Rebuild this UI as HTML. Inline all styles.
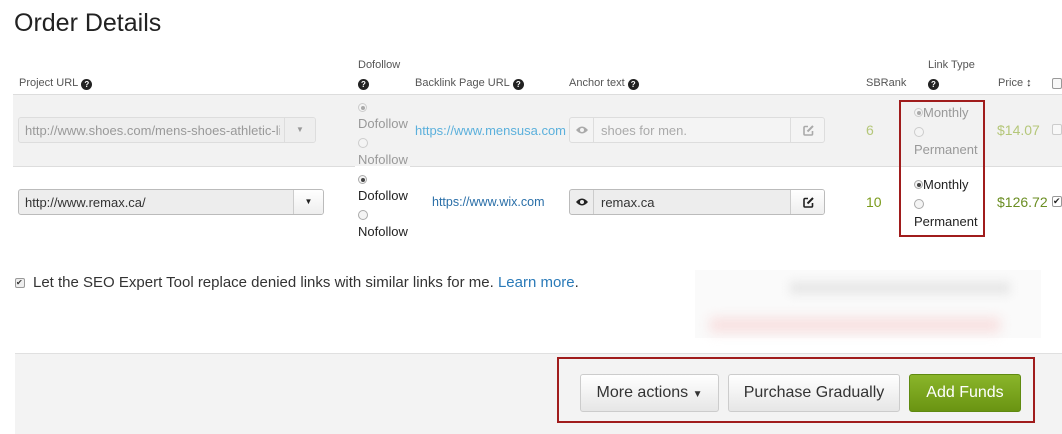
<!DOCTYPE html>
<html><head><style>
*{margin:0;padding:0;box-sizing:border-box}
body{width:1062px;height:434px;background:#fff;font-family:"Liberation Sans",Arial,sans-serif;position:relative;overflow:hidden;color:#333}
.a{position:absolute;white-space:nowrap}
.h{font-size:11px;color:#555}
.q{display:inline-block;width:11px;height:11px;border-radius:50%;background:#222;color:#fff;font-size:8px;font-weight:bold;text-align:center;line-height:11px;vertical-align:-1px;margin-left:3px}
.r{display:inline-block;width:10px;height:10px;border-radius:50%;border:1px solid #aaa;background:#f4f4f4;position:relative}
.r.on::after{content:"";position:absolute;left:2px;top:2px;width:4px;height:4px;border-radius:50%;background:#444}
.g .r{border-color:#ccc}.g .r.on::after{background:#aaa}
.t{font-size:14px}
.box{position:absolute;border:1px solid #ccc;border-radius:3px;background:#eee;font-size:13px;overflow:hidden}
.btn{position:absolute;top:374px;height:38px;border:1px solid #ccc;border-radius:3px;background:linear-gradient(#fff,#e6e6e6);font-size:16px;color:#333;text-align:center;line-height:36px}
</style></head><body>
<div class="a" style="left:14px;top:9px;font-size:25px;color:#222">Order Details</div>

<div class="a h" style="left:19px;top:77px">Project URL<span class="q">?</span></div>
<div class="a h" style="left:358px;top:59px">Dofollow</div>
<div class="a h" style="left:358px;top:77px"><span class="q" style="margin:0">?</span></div>
<div class="a h" style="left:415px;top:77px">Backlink Page URL<span class="q">?</span></div>
<div class="a h" style="left:569px;top:77px">Anchor text<span class="q">?</span></div>
<div class="a h" style="left:866px;top:77px">SBRank</div>
<div class="a h" style="left:928px;top:59px">Link Type</div>
<div class="a h" style="left:928px;top:77px"><span class="q" style="margin:0">?</span></div>
<div class="a h" style="left:998px;top:77px">Price <b style="color:#222">↕</b></div>
<div class="a" style="left:1052px;top:78px;width:10px;height:11px;border:1px solid #999;border-radius:2px;background:#f8f8f8"></div>

<div class="a" style="left:13px;top:94px;width:1049px;height:1px;background:#ddd"></div>
<div class="a" style="left:13px;top:95px;width:1049px;height:71px;background:#f2f2f2"></div>
<div class="a" style="left:13px;top:166px;width:1049px;height:1px;background:#ddd"></div>
<div class="a" style="left:355px;top:166px;width:55px;height:1px;background:#fff"></div>

<!-- row1 -->
<div class="box g" style="left:18px;top:117px;width:298px;height:26px;background:#eee;color:#999;border-color:#ddd">
 <span class="a" style="left:6px;top:5px;width:255px;overflow:hidden">http://www.shoes.com/mens-shoes-athletic-list</span>
 <span class="a" style="left:265px;top:0;width:31px;height:24px;border-left:1px solid #ddd;background:#eee;text-align:center;line-height:24px;font-size:8px;color:#999">▼</span>
</div>
<div class="a g" style="left:358px;top:100px;font-size:13px;color:#999;line-height:16px">
 <span class="r on" style="width:9px;height:9px"></span><br>Dofollow<br><span class="r" style="margin-top:6px"></span><br>Nofollow</div>
<div class="a" style="left:415px;top:123px;font-size:13px;color:#5bb0dc">https://www.mensusa.com</div>
<div class="box" style="left:569px;top:117px;width:256px;height:26px;background:#f4f4f4;border-color:#ddd;color:#aaa">
 <svg class="a" style="left:6px;top:7px" width="12" height="10" viewBox="0 0 12 10"><path d="M0 5Q6 -2 12 5Q6 12 0 5Z" fill="#aaa"/><circle cx="6" cy="5" r="2" fill="#f4f4f4"/></svg>
 <span class="a" style="left:23px;top:0;width:1px;height:24px;background:#ddd"></span>
 <span class="a" style="left:31px;top:5px">shoes for men.</span>
 <span class="a" style="left:220px;top:0;width:1px;height:24px;background:#ddd"></span>
 <svg class="a" style="left:233px;top:7px" width="11" height="11" viewBox="0 0 11 11"><path d="M5 1.5H2A1 1 0 0 0 1 2.5V9A1 1 0 0 0 2 10H8.5A1 1 0 0 0 9.5 9V6" stroke="#aaa" stroke-width="1.6" fill="none"/><path d="M4.5 6.5L10 1" stroke="#aaa" stroke-width="2"/></svg>
</div>
<div class="a t" style="left:866px;top:122px;color:#b5c77a">6</div>
<div class="a g" style="left:914px;top:104px;font-size:13px;color:#999;line-height:17px"><span class="r on" style="width:9px;height:9px"></span>Monthly<br><span class="r" style="margin-top:6px"></span><br>Permanent</div>
<div class="a t" style="left:997px;top:122px;color:#b5c77a">$14.07</div>
<div class="a" style="left:1052px;top:124px;width:10px;height:11px;border:1px solid #ccc;border-radius:2px;background:#f8f8f8"></div>

<!-- row2 -->
<div class="box" style="left:18px;top:189px;width:306px;height:26px;background:#ededed;border-color:#bbb;color:#333">
 <span class="a" style="left:6px;top:5px">http://www.remax.ca/</span>
 <span class="a" style="left:274px;top:0;width:30px;height:24px;border-left:1px solid #ccc;background:linear-gradient(#fff,#eee);text-align:center;line-height:24px;font-size:8px;color:#222">▼</span>
</div>
<div class="a" style="left:358px;top:172px;font-size:13px;color:#222;line-height:16px">
 <span class="r on" style="width:9px;height:9px"></span><br>Dofollow<br><span class="r" style="margin-top:6px"></span><br>Nofollow</div>
<div class="a" style="left:432px;top:195px;font-size:12.5px;color:#2a6fa8">https://www.wix.com</div>
<div class="box" style="left:569px;top:189px;width:256px;height:26px;background:#ededed;border-color:#bbb;color:#333">
 <svg class="a" style="left:6px;top:7px" width="12" height="10" viewBox="0 0 12 10"><path d="M0 5Q6 -2 12 5Q6 12 0 5Z" fill="#222"/><circle cx="6" cy="5" r="2" fill="#ededed"/></svg>
 <span class="a" style="left:23px;top:0;width:1px;height:24px;background:#ccc"></span>
 <span class="a" style="left:31px;top:5px">remax.ca</span>
 <span class="a" style="left:220px;top:0;width:35px;height:24px;border-left:1px solid #ccc;background:linear-gradient(#fff,#eee)"></span>
 <svg class="a" style="left:233px;top:7px" width="11" height="11" viewBox="0 0 11 11"><path d="M5 1.5H2A1 1 0 0 0 1 2.5V9A1 1 0 0 0 2 10H8.5A1 1 0 0 0 9.5 9V6" stroke="#222" stroke-width="1.6" fill="none"/><path d="M4.5 6.5L10 1" stroke="#222" stroke-width="2"/></svg>
</div>
<div class="a t" style="left:866px;top:194px;color:#7a9a1a">10</div>
<div class="a" style="left:914px;top:176px;font-size:13px;color:#222;line-height:17px"><span class="r on" style="width:9px;height:9px"></span>Monthly<br><span class="r" style="margin-top:6px"></span><br>Permanent</div>
<div class="a t" style="left:997px;top:194px;color:#6b8e23">$126.72</div>
<div class="a" style="left:1052px;top:196px;width:10px;height:11px;border:1px solid #999;border-radius:2px;background:#fff;font-size:9px;line-height:9px;color:#222">✔</div>

<div class="a" style="left:899px;top:100px;width:86px;height:137px;border:2px solid #a01c1c"></div>

<div class="a" style="left:15px;top:278px;width:10px;height:10px;border:1px solid #999;border-radius:2px;font-size:8px;line-height:8px;color:#333;background:#eee">✔</div>
<div class="a" style="left:33px;top:274px;font-size:15px;color:#333">Let the SEO Expert Tool replace denied links with similar links for me. <span style="color:#2a7ab8">Learn more</span>.</div>

<div class="a" style="left:695px;top:270px;width:346px;height:68px;background:#fafafa"></div>
<div class="a" style="left:790px;top:282px;width:220px;height:12px;background:#e6e6e6;filter:blur(5px)"></div>
<div class="a" style="left:710px;top:318px;width:290px;height:14px;background:#f8dede;filter:blur(6px)"></div>

<div class="a" style="left:15px;top:353px;width:1047px;height:81px;background:#f3f3f3;border-top:1px solid #e0e0e0"></div>
<div class="a" style="left:557px;top:357px;width:478px;height:66px;border:2px solid #a01c1c"></div>
<div class="btn" style="left:580px;width:139px">More actions <span style="font-size:10px">▼</span></div>
<div class="btn" style="left:728px;width:172px">Purchase Gradually</div>
<div class="btn" style="left:909px;width:112px;background:linear-gradient(#8ab52a,#6a9412);border-color:#5f8a10;color:#fff">Add Funds</div>
</body></html>
